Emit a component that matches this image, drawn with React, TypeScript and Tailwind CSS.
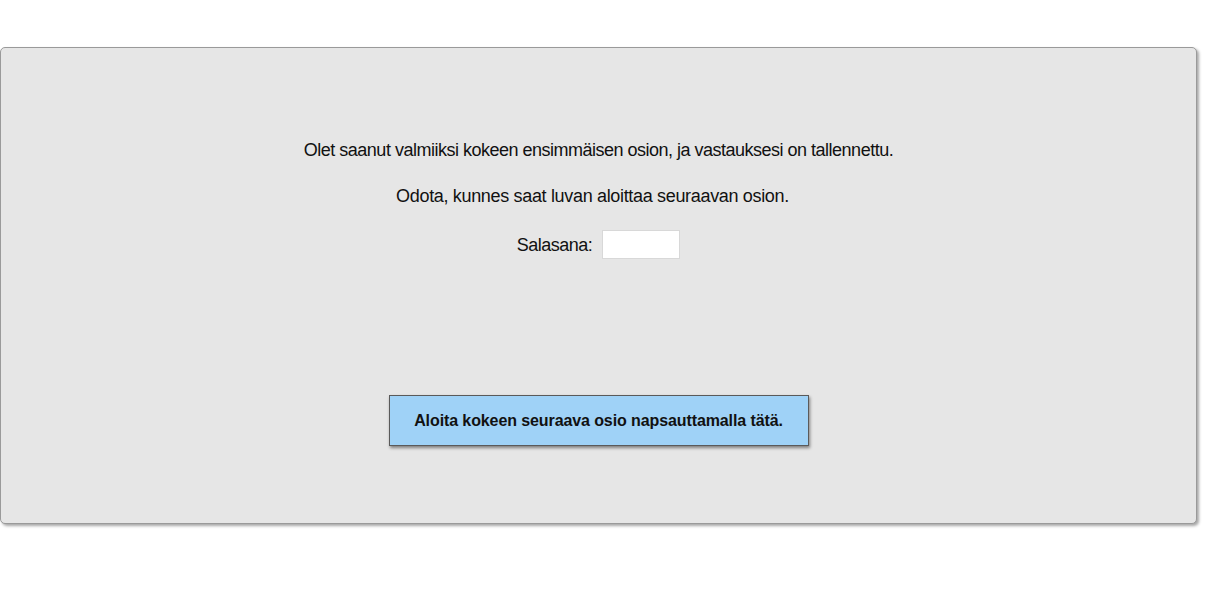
export default function App() {
  return (
    <div className="w-[1210px] h-[591px] bg-white pt-[47px] font-['Liberation_Sans',Arial,sans-serif]">
      <div className="w-[1197px] h-[477px] bg-[#e6e6e6] border border-[#9a9a9a] rounded-[5px] shadow-[2px_2px_3px_rgba(0,0,0,0.35)] flex flex-col items-center">
        <p className="mt-[91px] text-[18px] leading-[22px] text-[#111] tracking-[-0.5px]">
          Olet saanut valmiiksi kokeen ensimmäisen osion, ja vastauksesi on tallennettu.
        </p>
        <p className="mt-[24px] mr-[12px] text-[18px] leading-[22px] text-[#111] tracking-[-0.33px]">
          Odota, kunnes saat luvan aloittaa seuraavan osion.
        </p>
        <div className="mt-[23px] flex items-center gap-[10px]">
          <span className="text-[18px] leading-[22px] text-[#111] tracking-[-0.5px]">Salasana:</span>
          <input type="text" className="w-[78px] h-[29px] bg-white border border-[#d8d8d8] outline-none" />
        </div>
        <button className="mt-[136px] w-[420px] h-[51px] bg-[#9fd2f7] border border-[#5a5a5a] shadow-[1px_2px_3px_rgba(0,0,0,0.45)] text-[16px] font-bold text-[#111] tracking-[-0.1px]">
          Aloita kokeen seuraava osio napsauttamalla tätä.
        </button>
      </div>
    </div>
  );
}
